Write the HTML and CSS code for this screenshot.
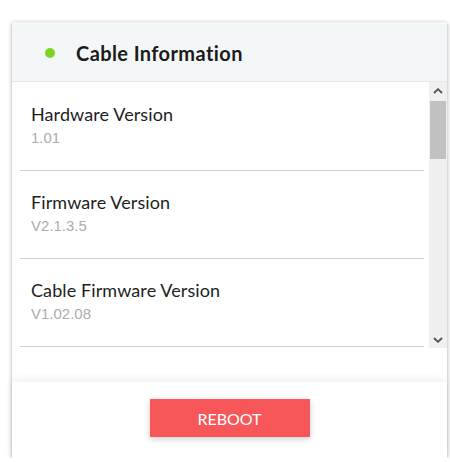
FILE: index.html
```html
<!DOCTYPE html>
<html>
<head>
<meta charset="utf-8">
<link rel="stylesheet" href="styles.css">
</head>
<body>
<div class="card">
  <div class="header">
    <span class="dot"></span>
    <h1 class="title">Cable Information</h1>
  </div>
  <div class="body">
    <div class="scroller">
      <div class="list">
        <div class="item">
          <div class="item-title">Hardware Version</div>
          <div class="item-value">1.01</div>
        </div>
        <div class="item">
          <div class="item-title">Firmware Version</div>
          <div class="item-value">V2.1.3.5</div>
        </div>
        <div class="item">
          <div class="item-title">Cable Firmware Version</div>
          <div class="item-value">V1.02.08</div>
        </div>
      </div>
      <div class="scrollbar">
        <div class="sb-btn">
          <svg width="10" height="6" viewBox="0 0 10 6"><path d="M1 5 L5 1.2 L9 5" fill="none" stroke="#505050" stroke-width="1.8"/></svg>
        </div>
        <div class="sb-track">
          <div class="sb-thumb"></div>
        </div>
        <div class="sb-btn">
          <svg width="10" height="6" viewBox="0 0 10 6"><path d="M1 1 L5 4.8 L9 1" fill="none" stroke="#505050" stroke-width="1.8"/></svg>
        </div>
      </div>
    </div>
  </div>
  <div class="footer">
    <button class="reboot">REBOOT</button>
  </div>
</div>
</body>
</html>
```
FILE: styles.css
```css
* { box-sizing: border-box; }
html, body { margin: 0; padding: 0; background: #ffffff; }
body { font-family: Lato, "Noto Sans", sans-serif; }

.card {
  margin: 22px 3px 0 12px;
  width: 435px;
  background: #fff;
  box-shadow: 0 1px 4px rgba(0,0,0,0.35);
  display: flex;
  flex-direction: column;
}

.header {
  height: 60px;
  background: #f4f7f8;
  border-bottom: 1px solid #e3e8ea;
  display: flex;
  align-items: center;
  padding: 2px 0 0 33px;
  gap: 21px;
}
.dot {
  width: 10px;
  height: 10px;
  border-radius: 50%;
  background: #7ed321;
  flex: none;
}
.title {
  margin: 0;
  font-family: Lato, sans-serif;
  font-weight: 700;
  font-size: 20px;
  letter-spacing: 0.4px;
  color: #1b1b1b;
}

.body {
  height: 300px;
}
.scroller {
  height: 266px;
  display: flex;
  padding-left: 8px;
}
.list {
  flex: 1;
  overflow: hidden;
  padding-top: 1px;
  margin-right: 5px;
}
.item {
  height: 88px;
  border-bottom: 1px solid #cfcfcf;
  padding: 20px 0 0 11px;
}
.item-title {
  font-family: Lato, sans-serif;
  font-size: 18px;
  line-height: 22px;
  letter-spacing: 0.1px;
  color: #1e1e1e;
}
.item-value {
  margin-top: 3px;
  font-family: "Liberation Sans", Arial, sans-serif;
  font-size: 15px;
  line-height: 20px;
  color: #acacac;
}

.scrollbar {
  width: 18px;
  background: #f0f0f0;
  display: flex;
  flex-direction: column;
}
.sb-btn {
  height: 17px;
  display: flex;
  align-items: center;
  justify-content: center;
}
.sb-track {
  flex: 1;
  padding: 2px 1px 0 1px;
}
.sb-thumb {
  height: 58px;
  background: #c1c1c1;
}

.footer {
  height: 76px;
  background: #fff;
  box-shadow: 0 -3px 8px rgba(0,0,0,0.06);
  display: flex;
  justify-content: center;
  padding-top: 17px;
  position: relative;
}
.reboot {
  width: 160px;
  height: 38px;
  border: none;
  background: #f8575a;
  color: #fff;
  font-family: Lato, sans-serif;
  font-size: 16px;
  font-weight: 400;
  box-shadow: 0 2px 6px rgba(0,0,0,0.2);
  padding: 0;
}
```
